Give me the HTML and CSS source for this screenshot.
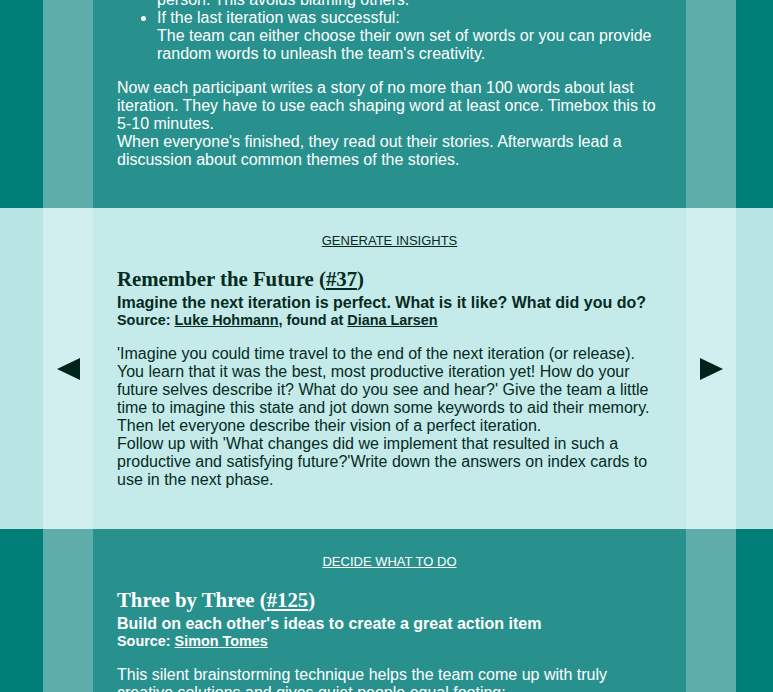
FILE: index.html
```html
<!DOCTYPE html>
<html lang="en">
<head>
<meta charset="utf-8">
<title>Retromat</title>
<link rel="stylesheet" href="styles.css">
</head>
<body>
<main class="plan">
  <section class="band band--teal band--scrolled">
    <div class="edge"></div>
    <div class="side"></div>
    <div class="content">
      <ul class="steps">
        <li class="steps__cont">person. This avoids blaming others.</li>
        <li>If the last iteration was successful:<br>The team can either choose their own set of words or you can provide random words to unleash the team's creativity.</li>
      </ul>
      <p class="desc">Now each participant writes a story of no more than 100 words about last iteration. They have to use each shaping word at least once. Timebox this to 5-10 minutes.<br>When everyone's finished, they read out their stories. Afterwards lead a discussion about common themes of the stories.</p>
    </div>
    <div class="side"></div>
    <div class="edge"></div>
  </section>

  <section class="band band--light">
    <div class="edge"></div>
    <div class="side"><a class="nav" href="#prev" aria-label="previous"><svg width="23" height="22" viewBox="0 0 23 22"><polygon points="0,11 23,0 23,22"/></svg></a></div>
    <div class="content">
      <div class="phase"><a href="#phase2">GENERATE INSIGHTS</a></div>
      <h2 class="title">Remember the Future (<a href="#37">#37</a>)</h2>
      <div class="summary">Imagine the next iteration is perfect. What is it like? What did you do?</div>
      <div class="source">Source: <a href="#hohmann">Luke Hohmann</a>, found at <a href="#larsen">Diana Larsen</a></div>
      <p class="desc">'Imagine you could time travel to the end of the next iteration (or release). You learn that it was the best, most productive iteration yet! How do your future selves describe it? What do you see and hear?' Give the team a little time to imagine this state and jot down some keywords to aid their memory. Then let everyone describe their vision of a perfect iteration.<br>Follow up with 'What changes did we implement that resulted in such a productive and satisfying future?'Write down the answers on index cards to use in the next phase.</p>
    </div>
    <div class="side"><a class="nav" href="#next" aria-label="next"><svg width="23" height="22" viewBox="0 0 23 22"><polygon points="0,0 23,11 0,22"/></svg></a></div>
    <div class="edge"></div>
  </section>

  <section class="band band--teal">
    <div class="edge"></div>
    <div class="side"></div>
    <div class="content">
      <div class="phase"><a href="#phase3">DECIDE WHAT TO DO</a></div>
      <h2 class="title">Three by Three (<a href="#125">#125</a>)</h2>
      <div class="summary">Build on each other's ideas to create a great action item</div>
      <div class="source">Source: <a href="#tomes">Simon Tomes</a></div>
      <p class="desc">This silent brainstorming technique helps the team come up with truly creative solutions and gives quiet people equal footing:</p>
    </div>
    <div class="side"></div>
    <div class="edge"></div>
  </section>
</main>
</body>
</html>
```

FILE: styles.css
```css
html, body {
  margin: 0;
  padding: 0;
}

body {
  font-family: "Liberation Sans", Arial, sans-serif;
  font-size: 16px;
  line-height: 18px;
  background: #007f78;
  overflow: hidden;
}

.plan {
  display: flex;
  flex-direction: column;
}

.band {
  display: grid;
  grid-template-columns: 43px 50px 593px 50px 37px;
}

.band--scrolled {
  margin-top: -34px;
}

.band--teal {
  color: #ffffff;
}
.band--teal .edge { background: #007f78; }
.band--teal .side { background: #5eadab; }
.band--teal .content { background: #28918e; }

.band--light {
  color: #062b22;
}
.band--light .edge { background: #b9e4e4; }
.band--light .side { background: #d2eff0; }
.band--light .content { background: #c4eaea; }

.band a {
  color: inherit;
  text-decoration: underline;
}

.side {
  display: flex;
  align-items: center;
  justify-content: center;
}

.nav {
  display: flex;
  padding-top: 1px;
}

.nav svg {
  fill: #00231b;
}

.content {
  padding: 25px 24px 24px;
}

.band--scrolled .content {
  padding-bottom: 23px;
}

.phase {
  font-size: 13px;
  line-height: 15px;
  text-align: center;
  margin-bottom: 19px;
}

.title {
  font-family: "Liberation Serif", "Times New Roman", serif;
  font-weight: bold;
  font-size: 20.8px;
  line-height: 24px;
  margin: 0 0 3px;
}

.summary {
  font-weight: bold;
  font-size: 16px;
  line-height: 18px;
}

.source {
  font-weight: bold;
  font-size: 14.4px;
  line-height: 17px;
}

.desc {
  margin: 16px 0 16px;
}

.steps {
  margin: 0 0 16px;
  padding-left: 40px;
}

.steps__cont {
  list-style: none;
}
```
